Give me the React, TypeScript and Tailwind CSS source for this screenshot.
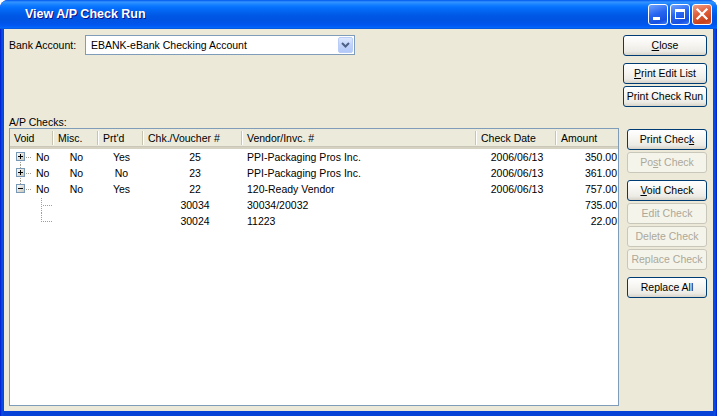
import React from "react";

interface Row {
  tree: "first" | "mid" | "open" | "child" | "childLast";
  void?: string;
  misc?: string;
  prtd?: string;
  chk: string;
  vendor: string;
  date?: string;
  amount: string;
}

const ROWS: Row[] = [
  { tree: "first", void: "No", misc: "No", prtd: "Yes", chk: "25", vendor: "PPI-Packaging Pros Inc.", date: "2006/06/13", amount: "350.00" },
  { tree: "mid", void: "No", misc: "No", prtd: "No", chk: "23", vendor: "PPI-Packaging Pros Inc.", date: "2006/06/13", amount: "361.00" },
  { tree: "open", void: "No", misc: "No", prtd: "Yes", chk: "22", vendor: "120-Ready Vendor", date: "2006/06/13", amount: "757.00" },
  { tree: "child", chk: "30034", vendor: "30034/20032", amount: "735.00" },
  { tree: "childLast", chk: "30024", vendor: "11223", amount: "22.00" },
];

const COLUMNS = [
  { label: "Void", w: "w-[44px]" },
  { label: "Misc.", w: "w-[45px]" },
  { label: "Prt'd", w: "w-[45px]" },
  { label: "Chk./Voucher #", w: "w-[99px]" },
  { label: "Vendor/Invc. #", w: "w-[234px]" },
  { label: "Check Date", w: "w-[80px]" },
  { label: "Amount", w: "w-[61px]" },
];

// dotted line helpers, 1px dots every other pixel
function vDots(x: number, y1: number, y2: number) {
  const out = [];
  for (let y = y1; y < y2; y += 2) out.push(<rect key={`v${x}-${y}`} x={x} y={y} width={1} height={1} fill="#a09f93" />);
  return out;
}
function hDots(y: number, x1: number, x2: number) {
  const out = [];
  for (let x = x1; x < x2; x += 2) out.push(<rect key={`h${y}-${x}`} x={x} y={y} width={1} height={1} fill="#a09f93" />);
  return out;
}

function TreeGlyph({ kind }: { kind: Row["tree"] }) {
  if (kind === "child" || kind === "childLast") {
    return (
      <svg width="44" height="16" className="shrink-0">
        {vDots(31, kind === "child" ? 1 : 0, kind === "child" ? 16 : 9)}
        {hDots(8, 33, 43)}
      </svg>
    );
  }
  return (
    <svg width="26" height="16" className="shrink-0">
      {kind !== "first" && vDots(10, 0, 4)}
      {kind !== "open" && vDots(10, 13, 16)}
      {hDots(8, 16, 22)}
      <defs>
        <linearGradient id="tbx" x1="0" y1="0" x2="1" y2="1">
          <stop offset="0" stopColor="#ffffff" />
          <stop offset="1" stopColor="#c6c3b4" />
        </linearGradient>
      </defs>
      <rect x="6.5" y="3.5" width="8" height="8" fill="url(#tbx)" stroke="#7898b5" />
      <rect x="8" y="7" width="5" height="1" fill="#000" />
      {kind !== "open" && <rect x="10" y="5" width="1" height="5" fill="#000" />}
    </svg>
  );
}

function XpButton({ children, disabled, narrow, className = "" }: { children: React.ReactNode; disabled?: boolean; narrow?: boolean; className?: string }) {
  return (
    <div
      className={`${narrow ? "w-[80px] self-end" : "w-full"} h-[21px] shrink-0 flex items-center justify-center rounded-[3px] border whitespace-nowrap ${
        disabled
          ? "border-[#c9c7ba] bg-[#f5f4ea] text-[#aca899]"
          : "border-[#003c74] bg-[linear-gradient(180deg,#ffffff_0%,#f6f5f1_45%,#ecebe5_80%,#d8d3c8_100%)] text-black"
      } ${className}`}
    >
      {children}
    </div>
  );
}

function TitleButtons() {
  return (
    <div className="ml-auto flex gap-[2px] pr-[5px]">
      <div className="w-[20px] h-[21px] rounded-[3px] border border-white bg-[linear-gradient(160deg,#6fa3ff_0%,#2766f0_45%,#1750e0_80%,#3c7cf8_100%)] flex">
        <svg width="18" height="19">
          <rect x="4" y="12" width="7" height="3" fill="#fff" />
        </svg>
      </div>
      <div className="w-[20px] h-[21px] rounded-[3px] border border-white bg-[linear-gradient(160deg,#6fa3ff_0%,#2766f0_45%,#1750e0_80%,#3c7cf8_100%)] flex">
        <svg width="18" height="19">
          <rect x="4" y="4" width="10" height="3" fill="#fff" />
          <rect x="4" y="4" width="1" height="10" fill="#fff" />
          <rect x="13" y="4" width="1" height="10" fill="#fff" />
          <rect x="4" y="13" width="10" height="1" fill="#fff" />
        </svg>
      </div>
      <div className="w-[20px] h-[21px] rounded-[3px] border border-white bg-[linear-gradient(160deg,#f0a088_0%,#e2623f_40%,#c9421c_80%,#d85a35_100%)] flex">
        <svg width="18" height="19">
          <path d="M4.5 4.5 L13.5 13.5 M13.5 4.5 L4.5 13.5" stroke="#fff" strokeWidth="2.2" strokeLinecap="square" />
        </svg>
      </div>
    </div>
  );
}

export default function App() {
  return (
    <div className="w-[717px] h-[416px] flex flex-col bg-[linear-gradient(90deg,#0019cf_0px,#0a4fe4_2px,#0843d8_4px,#0843d8_713px,#0a4fe4_715px,#0019cf_717px)] rounded-t-[8px] overflow-hidden font-['Liberation_Sans',Arial,sans-serif] text-[10.5px] leading-none text-black">
      {/* Title bar */}
      <div className="h-[29px] shrink-0 flex items-center pl-[25px] bg-[linear-gradient(180deg,#0058ee_0px,#3593ff_2px,#288eff_3px,#127dff_5px,#036ffc_8px,#0262ee_12px,#0057e5_16px,#0054e3_20px,#0055eb_24px,#005bf5_26px,#026afe_28px,#0a4cc4_29px)]">
        <span className="text-white font-bold text-[12.5px] [text-shadow:1px_1px_0_#0f1089]">View A/P Check Run</span>
        <TitleButtons />
      </div>

      {/* Body */}
      <div className="flex-1 min-h-0 flex gap-[4px] mx-[4px] mb-[5px] bg-[#ece9d8] pt-[6px] pb-[5px] pl-[5px] pr-[6px]">
        <div className="w-[610px] flex flex-col">
          <div className="h-[20px] flex items-center shrink-0">
            <span className="w-[76px]">Bank Account:</span>
            <div className="w-[270px] h-[20px] border border-[#7f9db9] bg-white flex items-center pl-[5px] pr-[1px]">
              <span>EBANK-eBank Checking Account</span>
              <div className="ml-auto w-[15px] h-[16px] rounded-[2px] border border-[#b9cdf7] bg-[linear-gradient(180deg,#dce8ff_0%,#c1d3fb_50%,#b2c8f7_100%)] flex items-center justify-center">
                <svg width="9" height="6">
                  <path d="M1 1 L4.5 4.5 L8 1" stroke="#4d6185" strokeWidth="2" fill="none" />
                </svg>
              </div>
            </div>
          </div>

          <div className="mt-[61px] h-[12px] flex items-center">A/P Checks:</div>

          <div className="flex-1 min-h-0 border border-[#7f9db9] bg-white flex flex-col">
            <div className="h-[20px] shrink-0 flex bg-[#ebeadb] border-b-[2px] border-[#d6d2c2] shadow-[inset_0_-1px_0_#cbc7b8]">
              {COLUMNS.map((c) => (
                <div key={c.label} className={`${c.w} shrink-0 flex items-center justify-between pl-[4px]`}>
                  <span className="whitespace-nowrap">{c.label}</span>
                  {c.label !== "Amount" && <div className="w-[2px] h-[14px] border-l border-[#c7c5b2] bg-white" />}
                </div>
              ))}
            </div>
            {ROWS.map((r, i) => (
              <div key={i} className="h-[16px] shrink-0 flex items-center whitespace-nowrap">
                <div className="w-[44px] shrink-0 flex items-center">
                  <TreeGlyph kind={r.tree} />
                  {r.void && <span>{r.void}</span>}
                </div>
                <div className="w-[45px] shrink-0 text-center">{r.misc}</div>
                <div className="w-[45px] shrink-0 text-center">{r.prtd}</div>
                <div className="w-[99px] shrink-0 text-center pl-[3px]">{r.chk}</div>
                <div className="w-[234px] shrink-0 pl-[4px]">{r.vendor}</div>
                <div className="w-[80px] shrink-0 text-center">{r.date}</div>
                <div className="w-[61px] shrink-0 text-right pr-[1px]">{r.amount}</div>
              </div>
            ))}
          </div>
        </div>

        <div className="w-[84px] flex flex-col">
          <XpButton><span><u>C</u>lose</span></XpButton>
          <XpButton className="mt-[7px]"><span><u>P</u>rint Edit List</span></XpButton>
          <XpButton className="mt-[2px]"><span>Print Check Run</span></XpButton>
          <XpButton narrow className="mt-[22px]"><span>Print Chec<u>k</u></span></XpButton>
          <XpButton narrow disabled className="mt-[2px]"><span>Po<u>s</u>t Check</span></XpButton>
          <XpButton narrow className="mt-[7px]"><span><u>V</u>oid Check</span></XpButton>
          <XpButton narrow disabled className="mt-[2px]"><span>Edit Check</span></XpButton>
          <XpButton narrow disabled className="mt-[2px]"><span>Delete Check</span></XpButton>
          <XpButton narrow disabled className="mt-[2px]"><span>Replace Check</span></XpButton>
          <XpButton narrow className="mt-[7px]"><span>Replace All</span></XpButton>
        </div>
      </div>
    </div>
  );
}
